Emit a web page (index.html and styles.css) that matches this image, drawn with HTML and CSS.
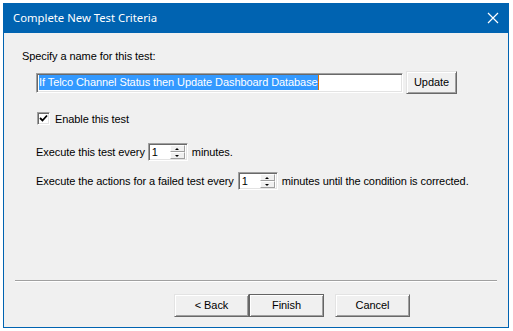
FILE: index.html
```html
<!DOCTYPE html>
<html>
<head>
<meta charset="utf-8">
<link rel="stylesheet" href="styles.css">
</head>
<body>
<div class="window">
  <div class="titlebar">
    <span class="title">Complete New Test Criteria</span>
    <svg class="close" width="12" height="12" viewBox="0 0 12 12"><path d="M1 1 L11 11 M11 1 L1 11" stroke="#fff" stroke-width="1.2" fill="none"/></svg>
  </div>
  <div class="client">
    <div class="label">Specify a name for this test:</div>
    <div class="name-row">
      <div class="field name-field"><span class="sel">If Telco Channel Status then Update Dashboard Database</span><span class="caret"></span></div>
      <div class="btn update">Update</div>
    </div>
    <div class="check-row">
      <div class="checkbox"><svg width="9" height="9" viewBox="0 0 9 9"><path d="M1 4 L3.5 6.5 L8 1.5" stroke="#000" stroke-width="1.8" fill="none"/></svg></div>
      <span>Enable this test</span>
    </div>
    <div class="spin-row first">
      <span>Execute this test every</span>
      <div class="field spin"><span class="val">1</span>
        <div class="spinbtns"><div class="sb up"><i></i></div><div class="sb down"><i></i></div></div>
      </div>
      <span>minutes.</span>
    </div>
    <div class="spin-row second">
      <span>Execute the actions for a failed test every</span>
      <div class="field spin"><span class="val">1</span>
        <div class="spinbtns"><div class="sb up"><i></i></div><div class="sb down"><i></i></div></div>
      </div>
      <span>minutes until the condition is corrected.</span>
    </div>
    <div class="spacer"></div>
    <div class="separator"></div>
    <div class="buttons">
      <div class="btn wide">&lt; Back</div>
      <div class="btn wide default">Finish</div>
      <div class="btn wide cancel">Cancel</div>
    </div>
  </div>
</div>
</body>
</html>
```
FILE: styles.css
```css
html, body { margin: 0; padding: 0; background: #fff; }
body { width: 513px; height: 331px; overflow: hidden; }
.window {
  margin: 3px 0 0 3px;
  width: 506px;
  height: 325px;
  display: flex;
  flex-direction: column;
  box-sizing: border-box;
}
.titlebar {
  height: 30px;
  background: #0063b1;
  display: flex;
  align-items: center;
  justify-content: space-between;
  padding: 0 10px 0 10px;
  flex: none;
}
.title {
  color: #fff;
  font-family: "Noto Sans", sans-serif;
  font-size: 11.3px;
  margin-top: -2px;
}
.close { margin-right: 0; margin-top: -1px; }
.client {
  flex: 1;
  background: #f0f0f0;
  border: 1px solid #0063b1;
  border-top: none;
  display: flex;
  flex-direction: column;
  font-family: "Liberation Sans", Arial, sans-serif;
  font-size: 11px;
  letter-spacing: -0.08px;
  color: #000;
  padding: 0 10px 10px 10px;
}
.label { margin: 17px 0 0 8px; line-height: 13px; }
.name-row {
  display: flex;
  align-items: center;
  margin: 8px 0 0 22px;
  height: 23px;
}
.field {
  background: #fff;
  border-top: 1px solid #a0a0a0;
  border-left: 1px solid #a0a0a0;
  border-right: 1px solid #fff;
  border-bottom: 1px solid #fff;
  box-shadow: inset 1px 1px 0 #696969, inset -1px -1px 0 #e3e3e3;
  box-sizing: border-box;
}
.name-field {
  width: 367px;
  height: 20px;
  display: flex;
  align-items: center;
  padding-left: 2px;
}
.sel {
  background: #3399ff;
  color: #fff;
  line-height: 15px;
  white-space: nowrap;
}
.caret { width: 1px; height: 15px; background: #e07000; }
.btn {
  background: #f0f0f0;
  border-top: 1px solid #e3e3e3;
  border-left: 1px solid #e3e3e3;
  border-right: 1px solid #696969;
  border-bottom: 1px solid #696969;
  box-shadow: inset 1px 1px 0 #fff, inset -1px -1px 0 #a0a0a0;
  box-sizing: border-box;
  display: flex;
  align-items: center;
  justify-content: center;
  line-height: 13px;
}
.update { width: 51px; height: 23px; margin-left: 3px; }
.check-row {
  display: flex;
  align-items: center;
  margin: 18px 0 0 23px;
  height: 13px;
}
.checkbox {
  width: 13px;
  height: 13px;
  box-sizing: border-box;
  background: #fff;
  border-top: 1px solid #a0a0a0;
  border-left: 1px solid #a0a0a0;
  border-right: 1px solid #fff;
  border-bottom: 1px solid #fff;
  box-shadow: inset 1px 1px 0 #696969, inset -1px -1px 0 #e3e3e3;
  display: flex;
  align-items: center;
  justify-content: center;
  margin-right: 5px;
}
.spin-row {
  display: flex;
  align-items: center;
  margin-left: 22px;
  height: 18px;
}
.spin-row.first { margin-top: 18px; }
.spin-row.second { margin-top: 11px; }
.spin {
  width: 40px;
  height: 18px;
  margin: 0 4px 0 3px;
  display: flex;
  align-items: center;
  justify-content: space-between;
  padding: 2px 2px 2px 3px;
}
.spin-row.second .spin { margin-left: 4px; }
.val { line-height: 13px; }
.spinbtns {
  width: 15px;
  height: 14px;
  display: flex;
  flex-direction: column;
}
.sb {
  flex: 1;
  background: #f0f0f0;
  border-right: 1px solid #a0a0a0;
  border-bottom: 1px solid #a0a0a0;
  border-left: 1px solid #fff;
  border-top: 1px solid #fff;
  box-sizing: border-box;
  display: flex;
  align-items: center;
  justify-content: center;
}
.sb i {
  width: 0; height: 0;
  border-left: 2px solid transparent;
  border-right: 2px solid transparent;
}
.sb.up i { border-bottom: 2px solid #000; }
.sb.down i { border-top: 2px solid #000; }
.spacer { flex: 1; }
.separator {
  height: 1px;
  background: #a0a0a0;
  border-bottom: 1px solid #fff;
  margin: 0 1px 0 1px;
}
.buttons {
  display: flex;
  margin: 12px 0 0 160px;
}
.wide { width: 75px; height: 23px; }
.btn.default {
  border: 1px solid #646464;
}
.cancel { margin-left: 11px; }
```
